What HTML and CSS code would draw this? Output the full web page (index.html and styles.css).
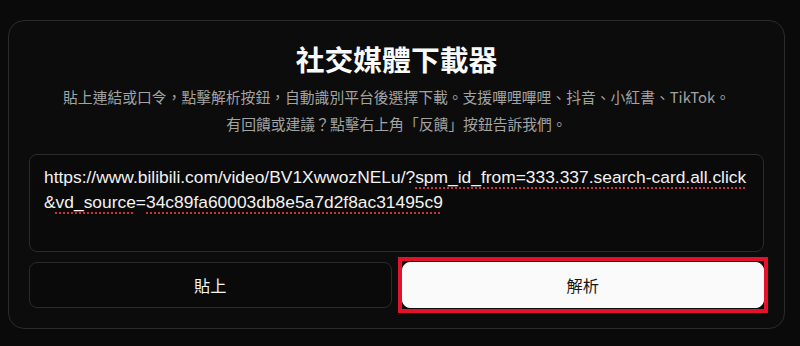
FILE: index.html
```html
<!DOCTYPE html>
<html lang="zh-Hant">
<head>
<meta charset="utf-8">
<title>社交媒體下載器</title>
<link rel="stylesheet" href="styles.css">
</head>
<body>
<div class="page">
  <section class="card">
    <h1 class="title">社交媒體下載器</h1>
    <div class="subtitle">
      <p>貼上連結或口令，點擊解析按鈕，自動識別平台後選擇下載。支援嗶哩嗶哩、抖音、小紅書、TikTok。</p>
      <p>有回饋或建議？點擊右上角「反饋」按鈕告訴我們。</p>
    </div>
    <div class="input">https://www.bilibili.com/video/BV1XwwozNELu/?<span class="sp">spm_id_from=333.337.search-card.all.click</span><br>&amp;<span class="sp">vd_source</span>=<span class="sp">34c89fa60003db8e5a7d2f8ac31495c9</span></div>
    <div class="actions">
      <button class="btn btn-outline">貼上</button>
      <button class="btn btn-primary">解析</button>
    </div>
  </section>
</div>
</body>
</html>
```
FILE: styles.css
```css
* { box-sizing: border-box; }
html, body { margin: 0; padding: 0; }
body {
  background: #0a0a0a;
  color: #f5f5f5;
  font-family: "Liberation Sans", "Noto Sans CJK TC", sans-serif;
}
.page {
  padding: 20px 15px 0 8px;
}
.card {
  background: #0c0c0c;
  border: 1px solid #2b2b2b;
  border-radius: 16px;
  padding: 20px 20px 20px 20px;
}
.title {
  margin: 0;
  text-align: center;
  font-family: "Noto Sans CJK TC", sans-serif;
  font-weight: 700;
  font-size: 28.8px;
  line-height: 36px;
  color: #fafafa;
}
.subtitle {
  margin-top: 6px;
  text-align: center;
  font-family: "Noto Sans CJK TC", sans-serif;
  font-size: 14.8px;
  line-height: 27px;
  color: #a3a3a3;
}
.subtitle p { margin: 0; }
.input {
  margin-top: 17px;
  height: 98px;
  border: 1px solid #2b2b2b;
  border-radius: 8px;
  background: #0a0a0a;
  padding: 10px 14px;
  font-family: "Liberation Sans", sans-serif;
  font-size: 17.4px;
  line-height: 25px;
  color: #f2f2f2;
  white-space: nowrap;
  overflow: hidden;
}
.sp {
  text-decoration: underline dotted #c8333a;
  text-decoration-thickness: 2px;
  text-underline-offset: 4px;
}
.actions {
  margin-top: 10px;
  display: grid;
  grid-template-columns: 1fr 1fr;
  gap: 10px;
}
.btn {
  height: 46px;
  border-radius: 8px;
  font-family: "Noto Sans CJK TC", sans-serif;
  font-size: 16.2px;
  cursor: pointer;
}
.btn-outline {
  background: #0a0a0a;
  border: 1px solid #2b2b2b;
  color: #f5f5f5;
}
.btn-primary {
  position: relative;
  background: #fafafa;
  border: 1px solid #fafafa;
  color: #171717;
}
.btn-primary::after {
  content: "";
  position: absolute;
  top: -6px;
  left: -5px;
  right: -5px;
  bottom: -6px;
  border: 4px solid #e3112c;
  pointer-events: none;
}
```
